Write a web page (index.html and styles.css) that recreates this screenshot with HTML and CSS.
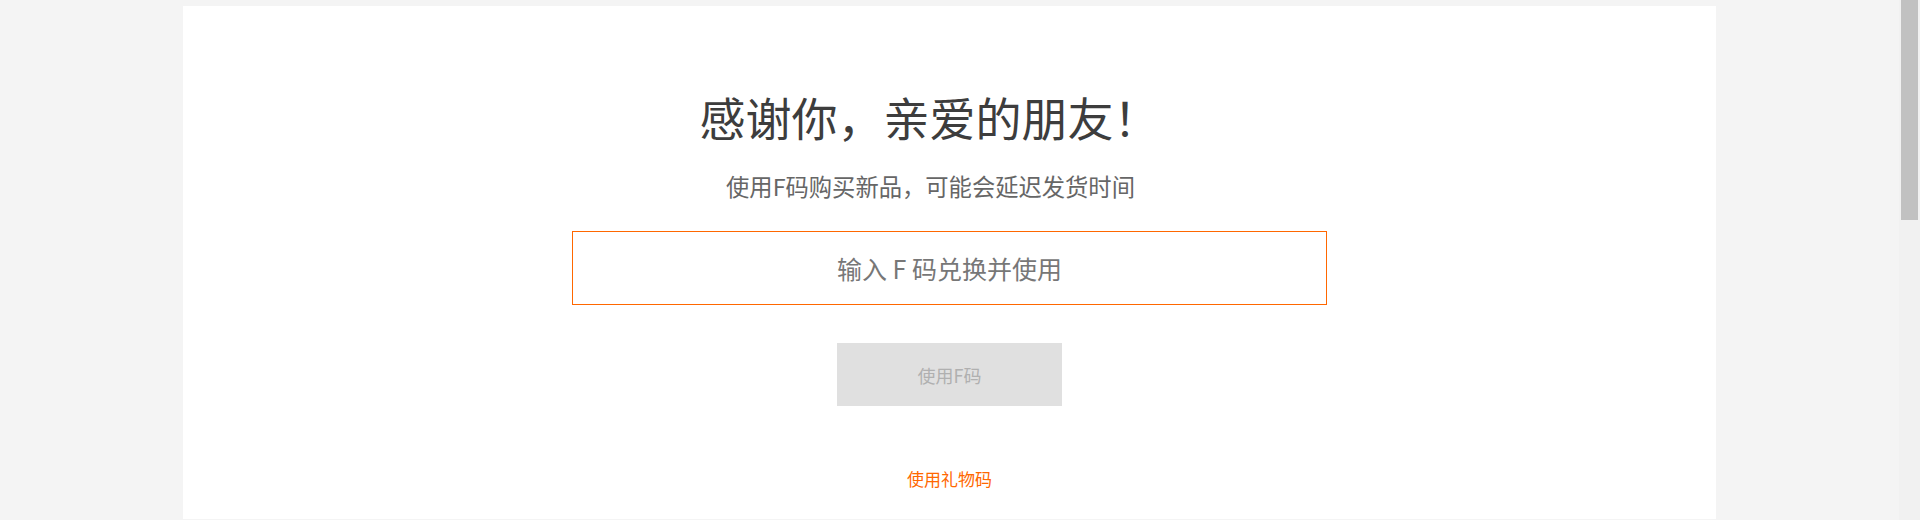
FILE: index.html
```html
<!DOCTYPE html>
<html lang="zh-CN">
<head>
<meta charset="utf-8">
<title>使用F码</title>
<link rel="stylesheet" href="styles.css">
</head>
<body>
<div class="page">
  <main class="card">
    <h1 class="title">感谢你，亲爱的朋友！</h1>
    <p class="subtitle">使用F码购买新品，可能会延迟发货时间</p>
    <input class="code-input" type="text" placeholder="输入 F 码兑换并使用">
    <button class="submit" type="button">使用F码</button>
    <a class="gift-link" href="#">使用礼物码</a>
  </main>
</div>
<div class="scrollbar"><div class="scrollbar-thumb"></div></div>
</body>
</html>
```

FILE: styles.css
```css
html {
  background: #f4f4f4;
  overflow: hidden;
}
body {
  margin: 0;
  font-family: "Noto Sans CJK SC", "Liberation Sans", sans-serif;
}
.page {
  padding-top: 6px;
  margin-right: 21px;
}
.card {
  width: 1533px;
  margin: 0 auto;
  background: #fff;
  display: flex;
  flex-direction: column;
  align-items: center;
  padding: 80px 0 29px;
  box-sizing: border-box;
}
.title {
  margin: 0;
  font-size: 46px;
  line-height: 60px;
  font-weight: 400;
  color: #3d3d3d;
  padding-right: 40px;
}
.subtitle {
  margin: 25px 0 0;
  font-size: 23.3px;
  line-height: 30px;
  color: #666;
  padding-right: 38px;
}
.code-input {
  margin-top: 30px;
  width: 755px;
  height: 74px;
  box-sizing: border-box;
  border: 1px solid #ff6700;
  outline: none;
  text-align: center;
  font-family: inherit;
  font-size: 25px;
  color: #333;
  padding: 0;
}
.code-input::placeholder {
  color: #777;
}
.submit {
  margin-top: 38px;
  width: 225px;
  height: 63px;
  border: 0;
  background: #e0e0e0;
  color: #b0b0b0;
  font-family: inherit;
  font-size: 18px;
  padding: 0;
}
.gift-link {
  margin-top: 62px;
  font-size: 17px;
  line-height: 22px;
  color: #ff6700;
  text-decoration: none;
}
.scrollbar {
  position: fixed;
  top: 0;
  right: 0;
  width: 21px;
  height: 100%;
  background: #f1f1f1;
  display: flex;
  justify-content: center;
}
.scrollbar-thumb {
  width: 17px;
  height: 220px;
  background: #c1c1c1;
}
```
